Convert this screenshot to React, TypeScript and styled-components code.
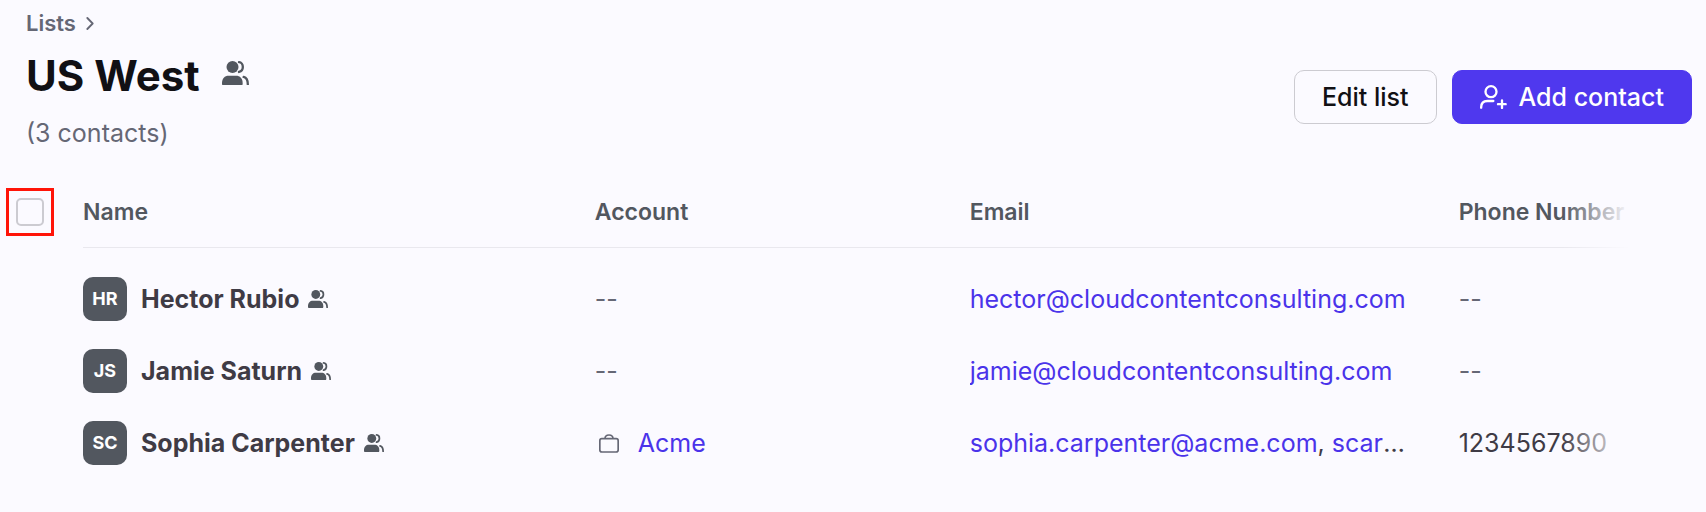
import React from 'react';
import styled, { createGlobalStyle, css } from 'styled-components';

const color = {
  page: '#fbfaff',
  ink: '#111014',
  text: '#3f3b45',
  slate: '#52575f',
  muted: '#656775',
  link: '#4a33ea',
  primary: '#4f38ee',
  border: '#cccbd1',
  rule: '#e9e8ee',
  highlight: '#ff1408',
};

const GlobalStyle = createGlobalStyle`
  *, *::before, *::after { box-sizing: border-box; }
  body {
    margin: 0;
    background: ${color.page};
    color: ${color.text};
    font-family: Inter, "Liberation Sans", sans-serif;
    font-size: 25px;
    line-height: 32px;
  }
`;

const Page = styled.main`
  display: flex;
  flex-direction: column;
  gap: 27px;
  padding-top: 8px;
`;

const Header = styled.header`
  display: flex;
  justify-content: space-between;
  align-items: flex-start;
  padding: 0 14px 0 26px;
`;

const Heading = styled.div`
  display: flex;
  flex-direction: column;
`;

const Breadcrumb = styled.nav`
  display: flex;
  align-items: center;
  gap: 10px;
  font-size: 22px;
  line-height: 30px;
  font-weight: 600;
  color: ${color.muted};

  a {
    color: inherit;
    text-decoration: none;
  }
`;

const TitleRow = styled.div`
  display: flex;
  align-items: center;
  gap: 22px;
  margin-top: 10px;
`;

const Title = styled.h1`
  margin: 0;
  font-size: 42px;
  line-height: 56px;
  font-weight: 700;
  color: ${color.ink};
`;

const TitleIcon = styled.span`
  display: flex;
  padding-bottom: 6px;
`;

const Count = styled.p`
  margin: 13px 0 0;
  color: ${color.muted};
`;

const Actions = styled.div`
  display: flex;
  gap: 15px;
  margin-top: 62px;
`;

const Button = styled.button<{ $primary?: boolean }>`
  display: flex;
  align-items: center;
  gap: 12px;
  height: 54px;
  padding: 0 27px;
  border: 1px solid ${color.border};
  border-radius: 10px;
  background: transparent;
  color: ${color.ink};
  font: inherit;
  font-weight: 500;
  cursor: pointer;

  ${({ $primary }) =>
    $primary &&
    css`
      border-color: ${color.primary};
      background: ${color.primary};
      color: #fff;
    `}
`;

const TableArea = styled.section`
  position: relative;
  margin-right: 76px;
  overflow: hidden;
`;

const Fade = styled.div`
  position: absolute;
  inset: 0 0 0 auto;
  width: 68px;
  background: linear-gradient(to right, rgba(251, 250, 255, 0), ${color.page});
  pointer-events: none;
`;

const Table = styled.table`
  width: 100%;
  table-layout: fixed;
  border-collapse: collapse;
  white-space: nowrap;
`;

const Column = styled.col<{ $width?: string }>`
  width: ${({ $width }) => $width ?? 'auto'};
`;

const HeadCell = styled.th`
  height: 71px;
  padding: 2px 0 0;
  border-bottom: 1px solid ${color.rule};
  font-size: 23px;
  font-weight: 600;
  text-align: left;
  color: ${color.slate};
`;

const SelectCell = styled.td`
  padding: 0 0 0 6px;
`;

const SelectAll = styled.label`
  display: flex;
  align-items: center;
  justify-content: center;
  width: 48px;
  height: 48px;
  border: 3px solid ${color.highlight};
`;

const Checkbox = styled.input`
  appearance: none;
  width: 28px;
  height: 28px;
  margin: 0;
  border: 2px solid ${color.border};
  border-radius: 5px;
  background: ${color.page};

  &:checked {
    background: ${color.primary};
  }
`;

const Body = styled.tbody`
  &::before {
    content: '';
    display: table-row;
    height: 16px;
  }
`;

const Cell = styled.td`
  height: 72px;
  padding: 0;
`;

const Person = styled.div`
  display: flex;
  align-items: center;
`;

const Avatar = styled.span`
  display: flex;
  align-items: center;
  justify-content: center;
  width: 44px;
  height: 44px;
  margin-right: 14px;
  border-radius: 10px;
  background: ${color.slate};
  color: #fff;
  font-size: 18px;
  font-weight: 700;
`;

const Name = styled.span`
  margin-right: 9px;
  font-weight: 700;
`;

const Empty = styled.span`
  color: ${color.muted};
`;

const Account = styled.div`
  display: flex;
  align-items: center;
  gap: 19px;
  padding-left: 4px;
`;

const Emails = styled.div`
  margin-right: 48px;
  overflow: hidden;
  text-overflow: ellipsis;
`;

const Link = styled.a`
  color: ${color.link};
  text-decoration: none;
`;

function ChevronIcon() {
  return (
    <svg width="8" height="13" viewBox="0 0 24 39" fill="none" stroke="currentColor" strokeWidth="5.5" strokeLinecap="round" strokeLinejoin="round" aria-hidden="true">
      <path d="M4 3 20 19.500 4 36" />
    </svg>
  );
}

function PeopleIcon({ size }: { size: number }) {
  return (
    <svg width={size} viewBox="0 0 81 74" fill={color.slate} aria-hidden="true">
      <circle cx="31.500" cy="18" r="18" />
      <path d="M0 66C0 52 8 44 20 44H42C54 44 62 52 62 66V68Q62 74 56 74H6Q0 74 0 68Z" />
      <path d="M51 3.500C58 4 62.500 10.500 62.500 18S58 31 51 33M65 48C73 50 77.500 57 77.500 70.500" fill="none" stroke={color.slate} strokeWidth="7" strokeLinecap="round" />
    </svg>
  );
}

function AddPersonIcon() {
  return (
    <svg width="27" height="24" viewBox="0 0 81 72" fill="none" stroke="currentColor" strokeWidth="7" strokeLinecap="round" aria-hidden="true">
      <circle cx="33" cy="20" r="16.500" />
      <path d="M3.500 68V67C3.500 55 10 48 22 48H40M66 46V69M54 57.500H77" />
    </svg>
  );
}

function BriefcaseIcon() {
  return (
    <svg width="20" height="19" viewBox="0 0 60 57" fill="none" stroke={color.muted} strokeWidth="5" aria-hidden="true">
      <rect x="2.500" y="14" width="55" height="40" rx="6" />
      <path d="M18 14C18 7 22 3 30 3S42 7 42 14" />
    </svg>
  );
}

interface Contact {
  name: string;
  initials: string;
  account?: string;
  emails: string[];
  phone?: string;
}

const contacts: Contact[] = [
  { name: 'Hector Rubio', initials: 'HR', emails: ['hector@cloudcontentconsulting.com'] },
  { name: 'Jamie Saturn', initials: 'JS', emails: ['jamie@cloudcontentconsulting.com'] },
  {
    name: 'Sophia Carpenter',
    initials: 'SC',
    account: 'Acme',
    emails: ['sophia.carpenter@acme.com', 'scarpenter@acme.com'],
    phone: '1234567890',
  },
];

function ContactRow({ contact }: { contact: Contact }) {
  return (
    <tr>
      <SelectCell />
      <Cell>
        <Person>
          <Avatar>{contact.initials}</Avatar>
          <Name>{contact.name}</Name>
          <PeopleIcon size={20} />
        </Person>
      </Cell>
      <Cell>
        {contact.account ? (
          <Account>
            <BriefcaseIcon />
            <Link href="#account">{contact.account}</Link>
          </Account>
        ) : (
          <Empty>--</Empty>
        )}
      </Cell>
      <Cell>
        <Emails>
          {contact.emails.map((email, i) => (
            <React.Fragment key={email}>
              {i > 0 && ', '}
              <Link href={`mailto:${email}`}>{email}</Link>
            </React.Fragment>
          ))}
        </Emails>
      </Cell>
      <Cell>{contact.phone ?? <Empty>--</Empty>}</Cell>
    </tr>
  );
}

export default function App() {
  return (
    <>
      <GlobalStyle />
      <Page>
        <Header>
          <Heading>
            <Breadcrumb aria-label="Breadcrumb">
              <a href="#lists">Lists</a>
              <ChevronIcon />
            </Breadcrumb>
            <TitleRow>
              <Title>US West</Title>
              <TitleIcon>
                <PeopleIcon size={27} />
              </TitleIcon>
            </TitleRow>
            <Count>(3 contacts)</Count>
          </Heading>
          <Actions>
            <Button type="button">Edit list</Button>
            <Button type="button" $primary>
              <AddPersonIcon />
              Add contact
            </Button>
          </Actions>
        </Header>
        <TableArea>
          <Table>
            <colgroup>
              <Column $width="83px" />
              <Column $width="31.4%" />
              <Column $width="23%" />
              <Column $width="30%" />
              <Column />
            </colgroup>
            <thead>
              <tr>
                <SelectCell>
                  <SelectAll>
                    <Checkbox type="checkbox" aria-label="Select all contacts" />
                  </SelectAll>
                </SelectCell>
                <HeadCell scope="col">Name</HeadCell>
                <HeadCell scope="col">Account</HeadCell>
                <HeadCell scope="col">Email</HeadCell>
                <HeadCell scope="col">Phone Number</HeadCell>
              </tr>
            </thead>
            <Body>
              {contacts.map((contact) => (
                <ContactRow key={contact.name} contact={contact} />
              ))}
            </Body>
          </Table>
          <Fade />
        </TableArea>
      </Page>
    </>
  );
}
